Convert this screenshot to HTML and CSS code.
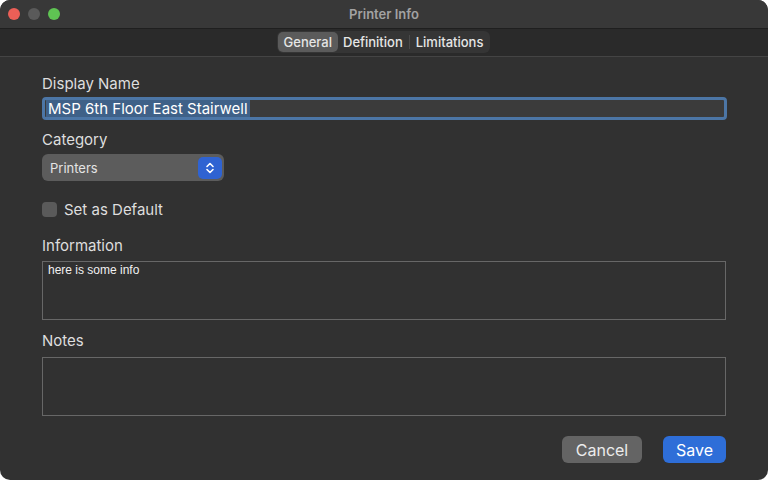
FILE: index.html
```html
<!DOCTYPE html>
<html>
<head>
<meta charset="utf-8">
<link rel="stylesheet" href="styles.css">
</head>
<body>
<div class="window">
  <div class="titlebar">
    <div class="lights">
      <span class="light red"></span>
      <span class="light gray"></span>
      <span class="light green"></span>
    </div>
    <div class="title">Printer Info</div>
    <div></div>
  </div>
  <div class="toolbar">
    <div class="segmented">
      <span class="seg active">General</span>
      <span class="seg">Definition</span>
      <span class="divider"></span>
      <span class="seg">Limitations</span>
    </div>
  </div>
  <div class="content">
    <div class="label">Display Name</div>
    <div class="textfield"><span class="selected">MSP 6th Floor East Stairwell</span></div>
    <div class="label mt">Category</div>
    <div class="popup">
      <span class="popup-text">Printers</span>
      <span class="stepper">
        <svg width="10" height="14" viewBox="0 0 10 14"><path d="M2 5.5 L5 2.5 L8 5.5 M2 8.5 L5 11.5 L8 8.5" fill="none" stroke="#fff" stroke-width="1.6" stroke-linecap="round" stroke-linejoin="round"/></svg>
      </span>
    </div>
    <label class="check">
      <span class="box"></span>
      <span class="check-text">Set as Default</span>
    </label>
    <div class="label mt2">Information</div>
    <div class="textarea">here is some info</div>
    <div class="label mt3">Notes</div>
    <div class="textarea notes"></div>
    <div class="buttons">
      <span class="btn cancel">Cancel</span>
      <span class="btn save">Save</span>
    </div>
  </div>
</div>
</body>
</html>
```
FILE: styles.css
```css
html, body {
  margin: 0;
  padding: 0;
  background: #ffffff;
}
body {
  font-family: Inter, "Liberation Sans", sans-serif;
  width: 768px;
  height: 480px;
  overflow: hidden;
}
.window {
  width: 768px;
  height: 480px;
  border-radius: 10px;
  overflow: hidden;
  background: #313131;
  display: flex;
  flex-direction: column;
}
.titlebar {
  height: 28px;
  background: #383838;
  display: grid;
  grid-template-columns: 1fr auto 1fr;
  align-items: center;
}
.lights {
  display: flex;
  gap: 8px;
  padding-left: 8px;
}
.light {
  width: 12px;
  height: 12px;
  border-radius: 50%;
}
.red { background: #ec5f57; }
.gray { background: #5a5a5a; }
.green { background: #5fc453; }
.title {
  color: #a2a2a2;
  font-size: 13px;
  font-weight: 600;
}
.toolbar {
  background: #2a2a2a;
  border-top: 1px solid #1f1f1f;
  border-bottom: 1px solid #444;
  display: flex;
  justify-content: center;
  align-items: flex-start;
  padding-top: 2px;
  box-sizing: border-box;
  height: 29px;
}
.segmented {
  display: flex;
  align-items: center;
  height: 22px;
  background: #353535;
  border-radius: 6px;
  padding: 0 2px 0 1px;
  box-sizing: border-box;
  margin-left: -1px;
}
.seg {
  color: #e6e6e6;
  font-size: 13px;
  font-weight: 500;
  height: 20px;
  line-height: 20px;
  padding: 0 5px;
  border-radius: 5px;
}
.seg.active {
  background: #5b5b5b;
  padding: 0 6px;
}
.divider {
  width: 1px;
  height: 14px;
  background: #4a4a4a;
  margin: 0 1px;
}
.content {
  flex: 1;
  padding: 17px 42px 0 42px;
  display: flex;
  flex-direction: column;
}
.label {
  color: #dedede;
  font-size: 15px;
  line-height: 20px;
}
.label.mt { margin-top: 10px; }
.label.mt2 { margin-top: 17px; }
.label.mt3 { margin-top: 11px; }
.textfield {
  margin-top: 3px;
  height: 23px;
  box-sizing: border-box;
  border: 3px solid #4c76a6;
  border-radius: 4px;
  background: #3b3b3b;
  display: flex;
  align-items: center;
  padding-left: 1px;
  width: 685px;
}
.selected {
  background: #3f6188;
  color: #ffffff;
  font-size: 15px;
  line-height: 17px;
  padding: 0 2px;
}
.popup {
  margin-top: 4px;
  width: 182px;
  height: 27px;
  box-sizing: border-box;
  border-radius: 6px;
  background: #5c5c5c;
  display: flex;
  align-items: center;
  justify-content: space-between;
  padding: 0 2px 0 8px;
}
.popup-text {
  color: #e4e4e4;
  font-size: 13px;
}
.stepper {
  width: 24px;
  height: 22px;
  border-radius: 5px;
  background: #2f63d2;
  display: flex;
  align-items: center;
  justify-content: center;
}
.check {
  margin-top: 19px;
  display: flex;
  align-items: center;
  gap: 7px;
}
.box {
  width: 15px;
  height: 15px;
  border-radius: 4px;
  background: #5a5a5a;
}
.check-text {
  color: #dedede;
  font-size: 15px;
}
.textarea {
  margin-top: 5px;
  height: 59px;
  box-sizing: border-box;
  border: 1.5px solid #676767;
  color: #f0f0f0;
  font-family: "Liberation Sans", Arial, sans-serif;
  font-size: 12px;
  padding: 1px 5px;
  width: 684px;
}
.textarea.notes { margin-top: 6px; }
.buttons {
  margin-top: 20px;
  display: flex;
  justify-content: flex-end;
  gap: 21px;
  width: 684px;
}
.btn {
  height: 27px;
  border-radius: 6px;
  color: #ececec;
  font-size: 16px;
  display: flex;
  align-items: center;
  justify-content: center;
}
.cancel {
  width: 80px;
  background: #646464;
}
.save {
  width: 63px;
  background: #2e6ed8;
  color: #ffffff;
}
```
